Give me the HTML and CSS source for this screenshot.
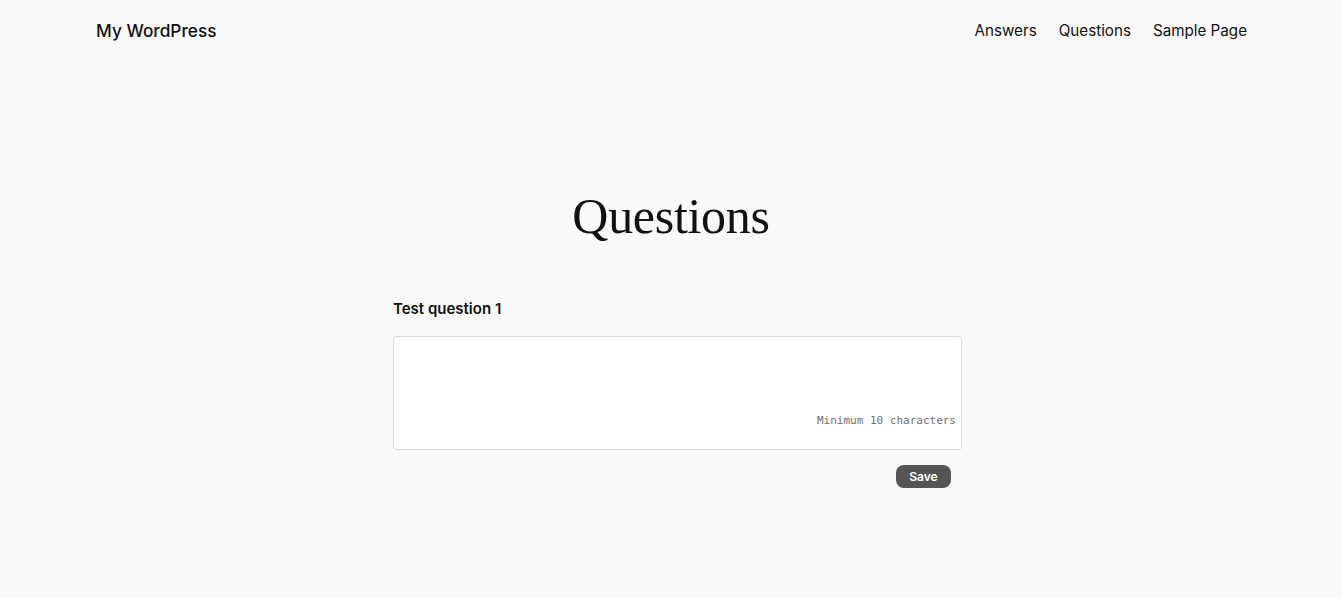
FILE: index.html
```html
<!DOCTYPE html>
<html lang="en">
<head>
<meta charset="utf-8">
<title>Questions – My WordPress</title>
<link rel="stylesheet" href="styles.css">
</head>
<body>
<header class="site-header">
  <a class="site-title" href="#">My WordPress</a>
  <nav class="site-nav">
    <a href="#">Answers</a>
    <a href="#">Questions</a>
    <a href="#">Sample Page</a>
  </nav>
</header>
<main class="main">
  <h1 class="page-title">Questions</h1>
  <form class="question-form">
    <label class="question-label" for="q1">Test question 1</label>
    <div class="field">
      <textarea id="q1" class="answer"></textarea>
      <span class="hint">Minimum 10 characters</span>
    </div>
    <div class="actions">
      <button type="button" class="save">Save</button>
    </div>
  </form>
</main>
</body>
</html>
```
FILE: styles.css
```css
html, body {
  margin: 0;
  padding: 0;
}
body {
  background: #f9f9f9;
  color: #111;
  font-family: Inter, "Liberation Sans", sans-serif;
  min-height: 598px;
}
a {
  color: #111;
  text-decoration: none;
}
.site-header {
  display: flex;
  justify-content: space-between;
  align-items: center;
  padding: 19px 95px 0 96px;
  height: 22px;
}
.site-title {
  font-size: 17.3px;
  font-weight: 500;
}
.site-nav {
  display: flex;
  gap: 22px;
  font-size: 15.2px;
}
.main {
  width: 556px;
  margin: 0 auto;
  padding-top: 145px;
}
.page-title {
  margin: 0;
  text-align: center;
  font-family: "Liberation Serif", "DejaVu Serif", serif;
  font-weight: 400;
  font-size: 50px;
  line-height: 60px;
  letter-spacing: -0.3px;
}
.question-form {
  margin-top: 53px;
}
.question-label {
  display: block;
  font-size: 15px;
  font-weight: 600;
  line-height: 20px;
}
.field {
  position: relative;
  margin-top: 17px;
  width: 569px;
}
.answer {
  display: block;
  box-sizing: border-box;
  width: 569px;
  height: 114px;
  margin: 0;
  padding: 6px;
  border: 1px solid #dcdcdc;
  border-radius: 4px;
  background: #fff;
  resize: none;
  font-family: inherit;
}
.hint {
  position: absolute;
  right: 6px;
  bottom: 23px;
  font-family: "DejaVu Sans Mono", "Liberation Mono", monospace;
  font-size: 11px;
  color: #6f6f6f;
}
.actions {
  display: flex;
  justify-content: flex-end;
  width: 558px;
  margin-top: 15px;
}
.save {
  background: #555;
  color: #fff;
  border: none;
  border-radius: 8px;
  height: 23px;
  width: 55px;
  padding: 0;
  font-family: Inter, "Liberation Sans", Arial, sans-serif;
  font-size: 12px;
  font-weight: 600;
}
```
